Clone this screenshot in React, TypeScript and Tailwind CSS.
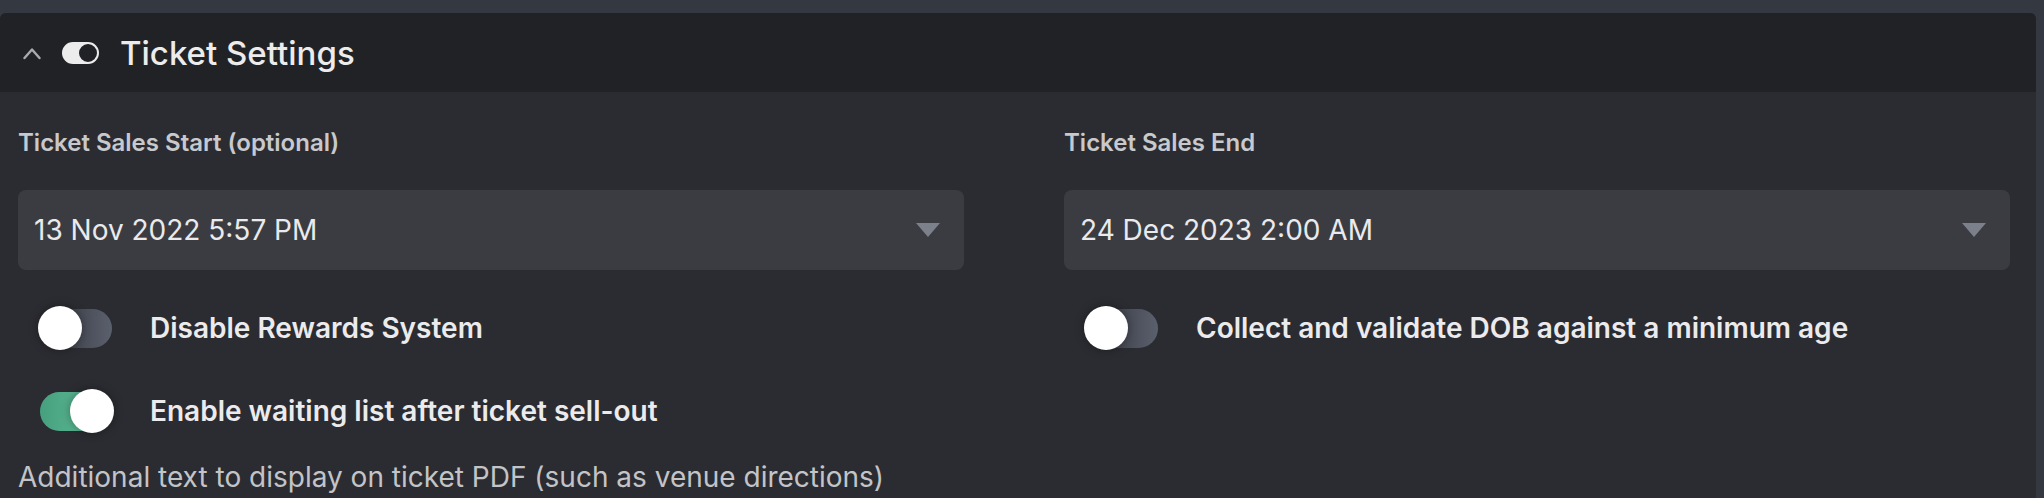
import { useState } from "react";

interface ToggleProps {
  checked: boolean;
  onChange: () => void;
}

const Switch = ({ checked, onChange }: ToggleProps) => {
  return (
    <button
      onClick={onChange}
      className="relative flex items-center w-[76px] h-[44px] shrink-0"
    >
      <div
        className={
          checked
            ? "absolute left-[2px] w-[72px] h-[39px] rounded-full bg-gradient-to-r from-[#46a07f] to-[#66c49d]"
            : "absolute left-[2px] w-[72px] h-[39px] rounded-full bg-gradient-to-r from-[#30323a] to-[#5b606d]"
        }
      ></div>
      <div
        className={
          checked
            ? "absolute left-[32px] w-[44px] h-[44px] rounded-full bg-white shadow-[0_0_10px_rgba(0,0,0,0.35)]"
            : "absolute left-0 w-[44px] h-[44px] rounded-full bg-white shadow-[0_0_10px_rgba(0,0,0,0.35)]"
        }
      ></div>
    </button>
  );
};

const DateSelect = ({ value }: { value: string }) => {
  return (
    <div className="flex items-center justify-between h-[80px] rounded-lg bg-[#3a3c42] pl-[16px] pr-[24px]">
      <span className="text-[28px] leading-[36px] text-[#eaeaec]">{value}</span>
      <svg width="24" height="14" viewBox="0 0 24 14">
        <polygon points="0,0 24,0 12,14" fill="#7c808b" />
      </svg>
    </div>
  );
};

const App = () => {
  const [disableRewards, setDisableRewards] = useState<boolean>(false);
  const [waitingList, setWaitingList] = useState<boolean>(true);
  const [collectDob, setCollectDob] = useState<boolean>(false);

  return (
    <div
      className="w-[2044px] h-[498px] overflow-hidden bg-[#343840] pt-[13px] pr-[8px]"
      style={{ fontFamily: "Inter, 'Noto Sans', sans-serif" }}
    >
      <div className="h-full bg-[#2b2c31] rounded-t-md">
        <div className="flex items-center h-[79px] bg-[#212226] rounded-t-md pl-[23px]">
          <svg width="18" height="14" viewBox="0 0 18 14" fill="none">
            <polyline
              points="1.5,12 9,3.5 16.5,12"
              stroke="#a9abb0"
              strokeWidth="2.4"
              strokeLinecap="round"
              strokeLinejoin="round"
            />
          </svg>
          <svg width="37" height="22" viewBox="0 0 37 22" className="ml-[21px]">
            <path
              fillRule="evenodd"
              fill="#ececec"
              d="M11 0H26A11 11 0 0 1 26 22H11A11 11 0 0 1 11 0ZM26 2A9 9 0 1 0 26 20A9 9 0 1 0 26 2Z"
            />
          </svg>
          <div className="ml-[21px] text-[33px] leading-[40px] font-medium text-[#ececec]">
            Ticket Settings
          </div>
        </div>

        <div className="grid grid-cols-2 gap-x-[100px] pl-[18px] pr-[26px] pt-[37px]">
          <div className="flex flex-col">
            <div className="h-[28px] leading-[28px] text-[24px] font-semibold text-[#c8c9cd]">
              Ticket Sales Start (optional)
            </div>
            <div className="mt-[33px]">
              <DateSelect value="13 Nov 2022 5:57 PM" />
            </div>
            <div className="flex items-center mt-[36px] pl-[20px] gap-[36px]">
              <Switch
                checked={disableRewards}
                onChange={() => setDisableRewards(!disableRewards)}
              />
              <span className="text-[28px] leading-[44px] font-semibold text-[#ebebed]">
                Disable Rewards System
              </span>
            </div>
            <div className="flex items-center mt-[39px] pl-[20px] gap-[36px]">
              <Switch
                checked={waitingList}
                onChange={() => setWaitingList(!waitingList)}
              />
              <span className="text-[28px] leading-[44px] font-semibold text-[#ebebed]">
                Enable waiting list after ticket sell-out
              </span>
            </div>
            <div className="mt-[27px] whitespace-nowrap leading-[34px] text-[28px] text-[#c3c4c8]">
              Additional text to display on ticket PDF (such as venue directions)
            </div>
          </div>

          <div className="flex flex-col">
            <div className="h-[28px] leading-[28px] text-[24px] font-semibold text-[#c8c9cd]">
              Ticket Sales End
            </div>
            <div className="mt-[33px]">
              <DateSelect value="24 Dec 2023 2:00 AM" />
            </div>
            <div className="flex items-center mt-[36px] pl-[20px] gap-[36px]">
              <Switch
                checked={collectDob}
                onChange={() => setCollectDob(!collectDob)}
              />
              <span className="text-[28px] leading-[44px] font-semibold text-[#ebebed]">
                Collect and validate DOB against a minimum age
              </span>
            </div>
          </div>
        </div>
      </div>
    </div>
  );
};

export default App;
